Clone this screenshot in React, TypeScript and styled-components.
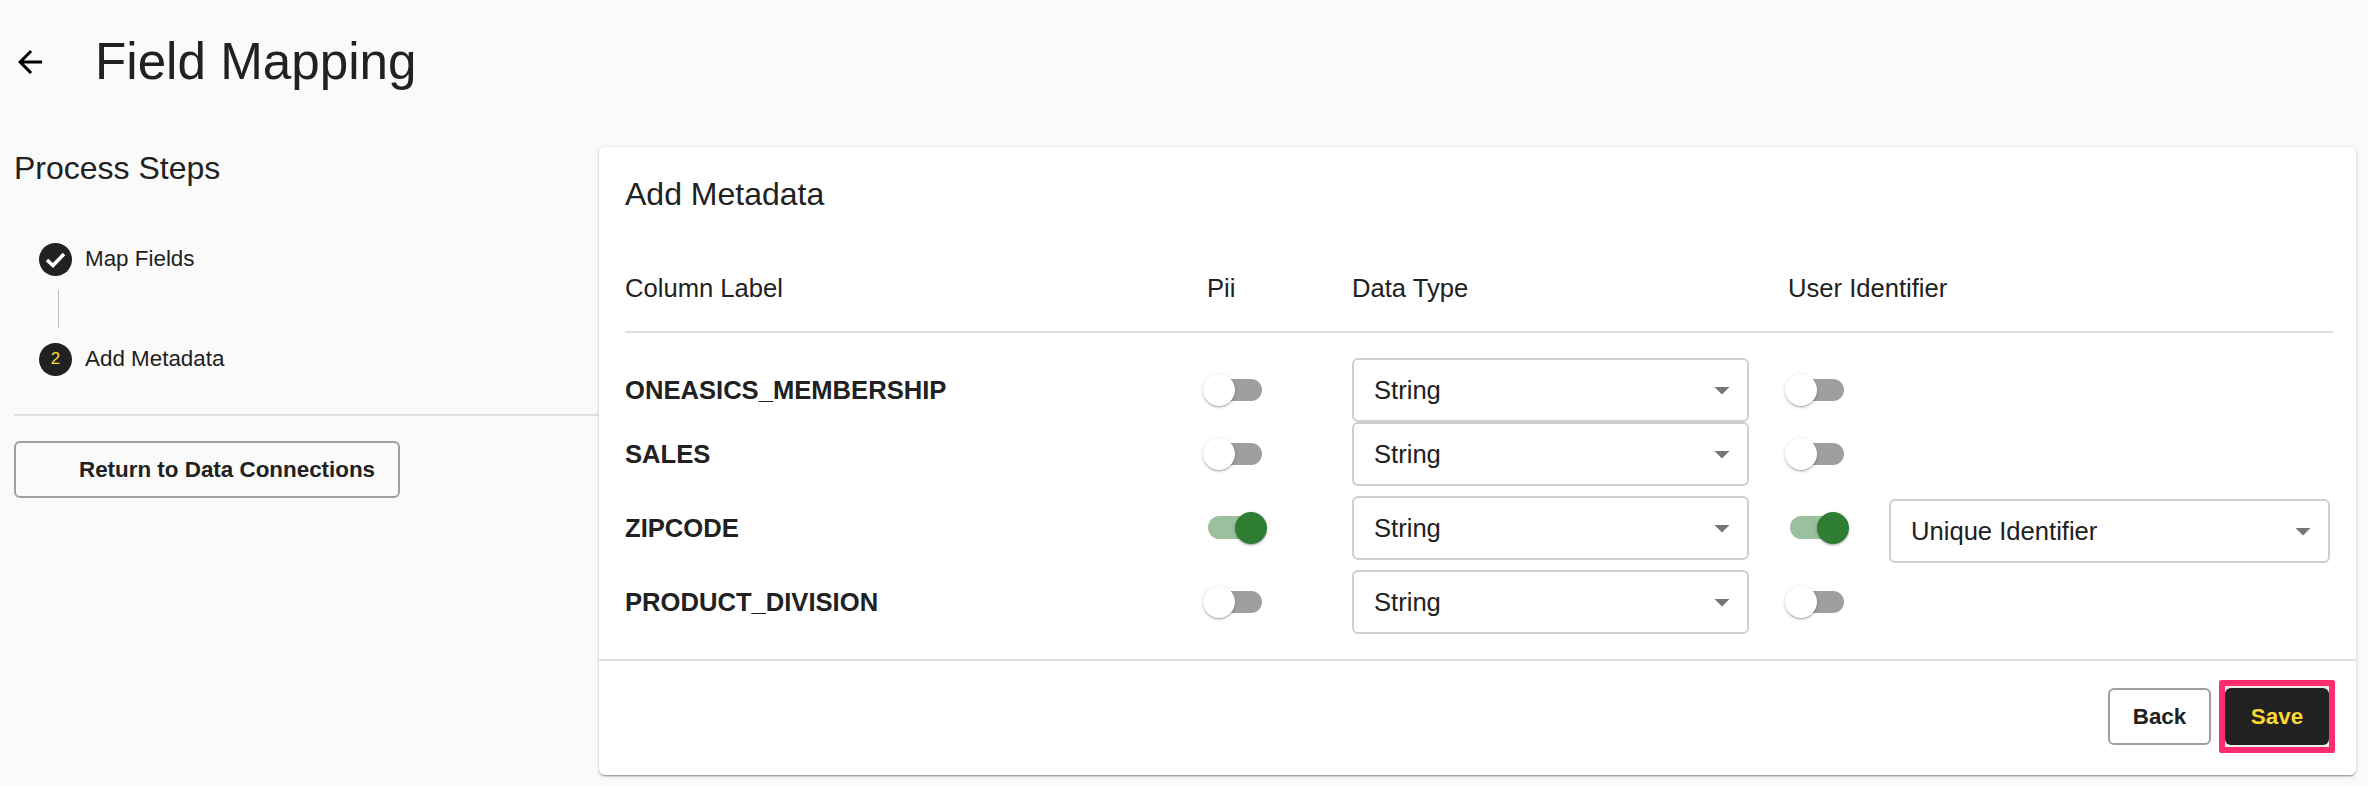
import React from 'react';
import styled, { createGlobalStyle } from 'styled-components';

const GlobalStyle = createGlobalStyle`
  html, body {
    margin: 0;
    padding: 0;
    background: #fafafa;
    color: #212121;
    font-family: "Liberation Sans", Arial, sans-serif;
  }
`;

const Page = styled.div`
  width: 2368px;
  height: 786px;
  overflow: hidden;
  background: #fafafa;
`;

const Header = styled.header`
  height: 147px;
  display: flex;
  align-items: flex-start;
  padding-top: 34px;
  box-sizing: border-box;
`;

const BackIcon = styled.button`
  width: 36px;
  height: 36px;
  margin: 10px 0 0 12px;
  padding: 0;
  border: 0;
  background: none;
  color: #000;
  svg {
    display: block;
  }
`;

const Title = styled.h1`
  margin: 0 0 0 47px;
  font-size: 51.2px;
  font-weight: 400;
  line-height: 56px;
`;

const Body = styled.div`
  display: flex;
  align-items: flex-start;
`;

const Sidebar = styled.aside`
  width: 585px;
  margin-left: 14px;
  flex: none;
`;

const SideTitle = styled.h2`
  margin: 0;
  padding-top: 3px;
  font-size: 32px;
  font-weight: 400;
  line-height: 36px;
`;

const Steps = styled.ol`
  list-style: none;
  margin: 0;
  padding: 56px 0 0 25px;
  border-bottom: 2px solid #e0e0e0;
  height: 230px;
  box-sizing: border-box;
`;

const Step = styled.li`
  display: flex;
  align-items: center;
  gap: 13px;
  height: 34px;
  font-size: 22.4px;
`;

const StepBadge = styled.span`
  width: 33px;
  height: 33px;
  flex: none;
  display: flex;
  align-items: center;
  justify-content: center;
  border-radius: 50%;
  background: #212121;
  color: #fdd835;
  font-size: 17px;
  svg {
    display: block;
  }
`;

const Connector = styled.div`
  width: 1px;
  height: 38px;
  margin: 14px 0 14px 19px;
  background: #bdbdbd;
`;

const OutlineButton = styled.button`
  height: 57px;
  box-sizing: border-box;
  border: 2px solid #a0a0a0;
  border-radius: 6px;
  background: transparent;
  color: #212121;
  font-family: inherit;
  font-size: 22.4px;
  font-weight: 700;
`;

const ReturnButton = styled(OutlineButton)`
  display: block;
  width: 386px;
  margin-top: 25px;
  padding: 0 0 0 63px;
  text-align: left;
`;

const Card = styled.section`
  width: 1757px;
  height: 628px;
  flex: none;
  display: flex;
  flex-direction: column;
  border-radius: 6px;
  background: #fff;
  box-shadow: 0 2px 2px -1px rgba(0, 0, 0, 0.3), 0 1px 2px rgba(0, 0, 0, 0.14), 0 1px 5px rgba(0, 0, 0, 0.1);
`;

const CardTitle = styled.h2`
  margin: 0;
  padding: 29px 26px 0;
  font-size: 32px;
  font-weight: 400;
  line-height: 36px;
`;

const Table = styled.div`
  margin: 0 23px 0 26px;
  flex: 1;
`;

const Row = styled.div<{ $gap?: number }>`
  display: grid;
  grid-template-columns: 578px 149px 433px 1fr;
  align-items: center;
  margin-top: ${(p) => p.$gap ?? 0}px;
`;

const HeadRow = styled(Row)`
  height: 76px;
  margin-top: 45px;
  border-bottom: 2px solid #e0e0e0;
  box-sizing: border-box;
  align-items: flex-start;
  font-size: 25.6px;
  line-height: 28px;
  padding-top: 17px;
`;

const HeadCell = styled.div<{ $inset?: number }>`
  padding-left: ${(p) => p.$inset ?? 0}px;
`;

const Rows = styled.div`
  padding-top: 25px;
`;

const FieldName = styled.div`
  font-size: 25.6px;
  font-weight: 700;
`;

const UserCell = styled.div`
  display: flex;
  align-items: center;
  gap: 40px;
`;

const SwitchBox = styled.span`
  position: relative;
  display: block;
  width: 64px;
  height: 32px;
  flex: none;
`;

const Track = styled.span<{ $on: boolean }>`
  position: absolute;
  left: 5px;
  top: ${(p) => (p.$on ? 4 : 5)}px;
  width: 54px;
  height: ${(p) => (p.$on ? 23 : 22)}px;
  border-radius: 12px;
  background: ${(p) => (p.$on ? '#9bc09d' : '#9f9f9f')};
`;

const Thumb = styled.span<{ $on: boolean }>`
  position: absolute;
  left: ${(p) => (p.$on ? 32 : 0)}px;
  top: 0;
  width: 32px;
  height: 32px;
  border-radius: 50%;
  background: ${(p) => (p.$on ? '#2e7d32' : '#fff')};
  box-shadow: 0 2px 2px -1px rgba(0, 0, 0, 0.2), 0 1px 2px rgba(0, 0, 0, 0.14), 0 1px 4px rgba(0, 0, 0, 0.12);
`;

const SelectBox = styled.div<{ $width: number; $down?: number }>`
  position: relative;
  width: ${(p) => p.$width}px;
  height: 64px;
  box-sizing: border-box;
  display: flex;
  align-items: center;
  padding-left: 20px;
  border: 2px solid #cfcfcf;
  border-radius: 6px;
  background: #fff;
  font-size: 25.6px;
  transform: translateY(${(p) => p.$down ?? 0}px);
  svg {
    position: absolute;
    right: 7px;
    top: 12px;
    color: #757575;
  }
`;

const Footer = styled.footer`
  height: 116px;
  flex: none;
  box-sizing: border-box;
  border-top: 2px solid #e0e0e0;
  display: flex;
  justify-content: flex-end;
  align-items: flex-start;
  gap: 8px;
  padding: 27px 21px 0 0;
`;

const BackButton = styled(OutlineButton)`
  width: 103px;
`;

const SaveHighlight = styled.div`
  border: 6px solid #ff2d6f;
  border-radius: 2px;
  padding: 2px 0;
  margin-top: -8px;
  background: #ececec;
`;

const SaveButton = styled.button`
  display: block;
  width: 104px;
  height: 57px;
  border: 0;
  border-radius: 6px;
  background: #212121;
  color: #fdd835;
  font-family: inherit;
  font-size: 22.4px;
  font-weight: 700;
`;

function Toggle({ on }: { on?: boolean }) {
  return (
    <SwitchBox>
      <Track $on={!!on} />
      <Thumb $on={!!on} />
    </SwitchBox>
  );
}

function Select({ value, width, down }: { value: string; width: number; down?: number }) {
  return (
    <SelectBox $width={width} $down={down}>
      {value}
      <svg width="36" height="36" viewBox="0 0 24 24" fill="currentColor">
        <path d="M7 10l5 5 5-5z" />
      </svg>
    </SelectBox>
  );
}

const fields = [
  { name: 'ONEASICS_MEMBERSHIP', gap: 0 },
  { name: 'SALES', gap: 0 },
  { name: 'ZIPCODE', gap: 10, on: true },
  { name: 'PRODUCT_DIVISION', gap: 10 },
];

export default function App() {
  return (
    <Page>
      <GlobalStyle />
      <Header>
        <BackIcon aria-label="Back">
          <svg width="36" height="36" viewBox="0 0 24 24" fill="currentColor">
            <path d="M20 11H7.83l5.59-5.59L12 4l-8 8 8 8 1.41-1.41L7.83 13H20v-2z" />
          </svg>
        </BackIcon>
        <Title>Field Mapping</Title>
      </Header>
      <Body>
        <Sidebar>
          <SideTitle>Process Steps</SideTitle>
          <Steps>
            <Step>
              <StepBadge>
                <svg width="33" height="33" viewBox="0 0 33 33" fill="none" stroke="#fff" strokeWidth="3.6">
                  <path d="M8 17l6 5.5L25 11" />
                </svg>
              </StepBadge>
              Map Fields
            </Step>
            <Connector />
            <Step>
              <StepBadge>2</StepBadge>
              Add Metadata
            </Step>
          </Steps>
          <ReturnButton>Return to Data Connections</ReturnButton>
        </Sidebar>
        <Card>
          <CardTitle>Add Metadata</CardTitle>
          <Table>
            <HeadRow>
              <HeadCell>Column Label</HeadCell>
              <HeadCell $inset={4}>Pii</HeadCell>
              <HeadCell>Data Type</HeadCell>
              <HeadCell $inset={3}>User Identifier</HeadCell>
            </HeadRow>
            <Rows>
              {fields.map((f) => (
                <Row key={f.name} $gap={f.gap}>
                  <FieldName>{f.name}</FieldName>
                  <Toggle on={f.on} />
                  <Select value="String" width={397} />
                  <UserCell>
                    <Toggle on={f.on} />
                    {f.on && <Select value="Unique Identifier" width={441} down={3} />}
                  </UserCell>
                </Row>
              ))}
            </Rows>
          </Table>
          <Footer>
            <BackButton>Back</BackButton>
            <SaveHighlight>
              <SaveButton>Save</SaveButton>
            </SaveHighlight>
          </Footer>
        </Card>
      </Body>
    </Page>
  );
}
